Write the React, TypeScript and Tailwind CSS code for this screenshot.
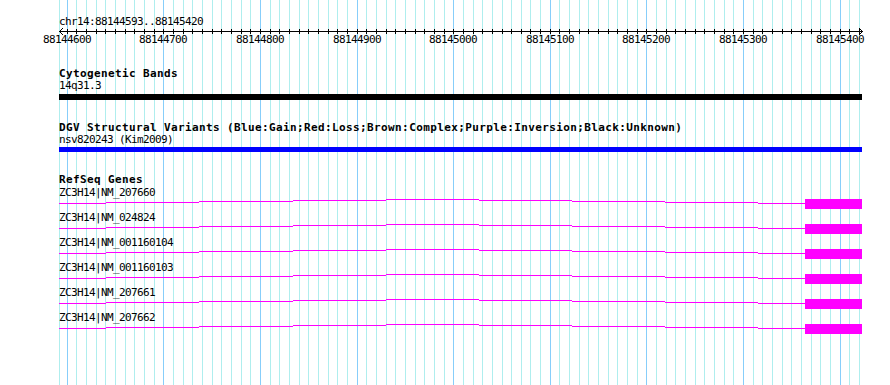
import React from "react";

// pixel columns of the 10bp grid, 88144600..88145420
const LEFT = 59;
const gridCols = Array.from({ length: 83 }, (_, k) => ({
  x: Math.floor(67.3 + 9.66 * k),
  major: k % 10 === 0,
  bp: 88144600 + k * 10,
}));

const genes = [
  "ZC3H14|NM_207660",
  "ZC3H14|NM_024824",
  "ZC3H14|NM_001160104",
  "ZC3H14|NM_001160103",
  "ZC3H14|NM_207661",
  "ZC3H14|NM_207662",
];

// intron "hat" segments: [from, to, y offset]
const hatStops = [59, 106, 199, 293, 386, 479, 572, 665, 758, 805];
const hatY = [4, 3, 2, 1, 0, 1, 2, 3, 4];

function Grid() {
  return (
    <svg
      className="absolute inset-0"
      width={890}
      height={385}
      shapeRendering="crispEdges"
    >
      <rect x={LEFT} y={0} width={1} height={385} fill="#afeeee" />
      {gridCols.map((c) => (
        <rect
          key={c.bp}
          x={c.x}
          y={0}
          width={1}
          height={385}
          fill={c.major ? "#87cefa" : "#afeeee"}
        />
      ))}
    </svg>
  );
}

function Axis() {
  return (
    <svg
      width={803}
      height={6}
      className="block overflow-visible"
      shapeRendering="crispEdges"
    >
      <rect x={0} y={3} width={804} height={1} fill="#000" />
      {gridCols.map((c) => (
        <rect
          key={c.bp}
          x={c.x - LEFT}
          y={1}
          width={1}
          height={5}
          fill="#000"
        />
      ))}
      {/* arrow heads */}
      {[0, 1, 2, 3].map((i) => (
        <React.Fragment key={i}>
          <rect x={i} y={3 - i} width={1} height={1} fill="#000" />
          <rect x={i} y={3 + i} width={1} height={1} fill="#000" />
          <rect x={803 - i} y={3 - i} width={1} height={1} fill="#000" />
          <rect x={803 - i} y={3 + i} width={1} height={1} fill="#000" />
        </React.Fragment>
      ))}
    </svg>
  );
}

function Title({ children, className = "" }: { children: React.ReactNode; className?: string }) {
  return (
    <div
      className={`h-[12px] leading-[12px] text-[11px] font-bold tracking-[0.38px] whitespace-nowrap ${className}`}
    >
      {children}
    </div>
  );
}

function Label({ children, className = "" }: { children: React.ReactNode; className?: string }) {
  return (
    <div
      className={`h-[12px] leading-[12px] text-[11px] tracking-[-0.62px] whitespace-nowrap ${className}`}
    >
      {children}
    </div>
  );
}

function GeneRow({ name }: { name: string }) {
  return (
    <div className="flex flex-col">
      <Label>{name}</Label>
      <svg width={803} height={10} className="block" shapeRendering="crispEdges">
        {hatY.map((y, i) => (
          <rect
            key={i}
            x={hatStops[i] - LEFT}
            y={y}
            width={hatStops[i + 1] - hatStops[i]}
            height={1}
            fill="#ff00ff"
          />
        ))}
        <rect x={805 - LEFT} y={0} width={57} height={10} fill="#ff00ff" />
      </svg>
    </div>
  );
}

export default function App() {
  return (
    <div className="relative w-[890px] h-[385px] overflow-hidden bg-white text-black font-['DejaVu_Sans_Mono',monospace]">
      <Grid />
      <div className="relative ml-[59px] w-[803px] pt-[16px] flex flex-col">
        <Label>chr14:88144593..88145420</Label>
        <Axis />
        <div className="relative h-[12px]">
          {gridCols
            .filter((c) => c.major)
            .map((c) => (
              <span
                key={c.bp}
                className="absolute top-0 text-[11px] leading-[12px] tracking-[-0.62px] whitespace-nowrap"
                style={{ left: c.x - LEFT - 24 }}
              >
                {c.bp}
              </span>
            ))}
        </div>

        <Title className="mt-[22px]">Cytogenetic Bands</Title>
        <Label>14q31.3</Label>
        <div className="mt-[2px] h-[6px] bg-black" />

        <Title className="mt-[22px]">
          DGV Structural Variants (Blue:Gain;Red:Loss;Brown:Complex;Purple:Inversion;Black:Unknown)
        </Title>
        <Label>nsv820243 (Kim2009)</Label>
        <div className="mt-[1px] h-[5px] bg-[#0000ff]" />

        <Title className="mt-[22px]">RefSeq Genes</Title>
        <div className="mt-[1px] flex flex-col gap-[3px]">
          {genes.map((g) => (
            <GeneRow key={g} name={g} />
          ))}
        </div>
      </div>
    </div>
  );
}
